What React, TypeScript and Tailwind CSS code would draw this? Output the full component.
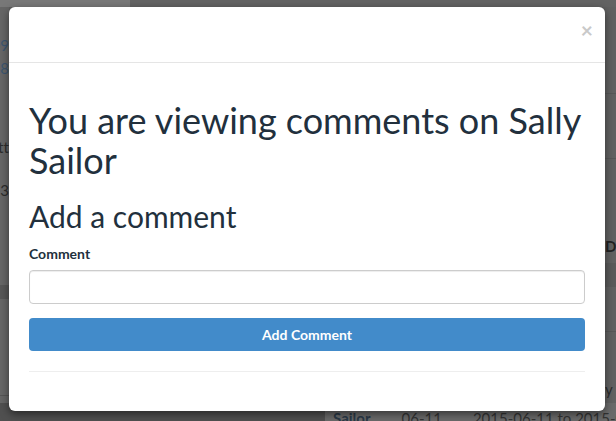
import { useState } from 'react'

function Backdrop() {
  return (
    <div className="absolute inset-0 flex flex-col bg-[#5f5f5f] font-['Lato',sans-serif]">
      {/* top strip of the page behind */}
      <div className="h-[7px] flex shrink-0">
        <div className="w-[130px] shrink-0 bg-[#787878]" />
        <div className="flex-1 bg-[#636363]" />
      </div>

      <div className="flex-1 flex justify-between">
        {/* left edge of the page, mostly hidden */}
        <div className="w-[9px] flex flex-col items-end bg-[#666666] text-[15px] whitespace-nowrap">
          <div className="mt-[27px] flex flex-col items-end leading-[23px] text-[#3d5670]">
            <span>2015-209</span>
            <span>2015-48</span>
          </div>
          <span className="mt-[56px] text-[#2c2c2c]">Settt</span>
          <span className="mt-[20px] text-[#2c2c2c]">12-3</span>
          <div className="mt-[84px] w-[9px] h-[14px] bg-[#575757]" />
          <div className="mt-[96px] w-[9px] h-px bg-[#555555]" />
        </div>

        {/* right edge of the table behind */}
        <div className="w-[11px] flex flex-col bg-[#616161] text-[15px] whitespace-nowrap">
          <div className="mt-[86px] h-px bg-[#575757]" />
          <div className="mt-[64px] h-px bg-[#575757]" />
          <span className="mt-[78px] font-bold leading-[18px] text-[#222]">Da</span>
          <div className="mt-[8px] h-[24px] bg-[#5a5a5a]" />
          <div className="mt-[44px] h-px bg-[#575757]" />
          <span className="mt-[48px] leading-[18px] text-[#2c2c2c]">y</span>
        </div>
      </div>

      {/* bottom row of the table behind */}
      <div className="h-[18px] flex shrink-0">
        <div className="w-[325px] shrink-0 bg-[#505050]" />
        <div className="flex-1 min-w-0 overflow-hidden flex gap-[31px] pl-[8px] pt-[6px] bg-[#6a6a6a] text-[15px] leading-[18px] whitespace-nowrap">
          <span className="font-bold text-[#2b3947]">Sailor</span>
          <span className="text-[#333]">06-11</span>
          <span className="text-[#333]">2015-06-11 to 2015-06-17</span>
        </div>
      </div>
    </div>
  )
}

export default function App() {
  const [comment, setComment] = useState('')

  return (
    <div className="relative w-[616px] h-[421px] overflow-hidden">
      <Backdrop />

      {/* Modal */}
      <div className="absolute left-[9px] top-[7px] w-[596px] h-[404px] bg-white rounded-[6px] shadow-[0_3px_9px_rgba(0,0,0,0.5)] font-['Lato',sans-serif] text-[#22303d]">
        <div className="h-[56px] border-b border-[#e5e5e5] flex items-start justify-end pr-[12px] pt-[12px]">
          <button className="text-[21px] leading-[21px] font-bold text-[#c9c9c9]">×</button>
        </div>

        <div className="px-[20px]">
          <h1 className="pt-[37px] text-[36px] leading-[40px] font-normal">
            You are viewing comments on Sally Sailor
          </h1>
          <h2 className="mt-[20px] text-[30px] leading-[33px] font-normal">Add a comment</h2>
          <label className="block mt-[11px] text-[14px] leading-[20px] font-bold">Comment</label>
          <input
            value={comment}
            onChange={(e) => setComment(e.target.value)}
            className="mt-[6px] block w-full h-[34px] border border-[#cccccc] rounded-[4px] px-[12px] text-[14px] outline-none shadow-[inset_0_1px_1px_rgba(0,0,0,0.075)]"
          />
          <button className="mt-[14px] w-full h-[33px] rounded-[4px] bg-[#428bca] text-white text-[14px] font-bold">
            Add Comment
          </button>
          <hr className="mt-[20px] border-t border-[#eeeeee]" />
        </div>
      </div>
    </div>
  )
}
